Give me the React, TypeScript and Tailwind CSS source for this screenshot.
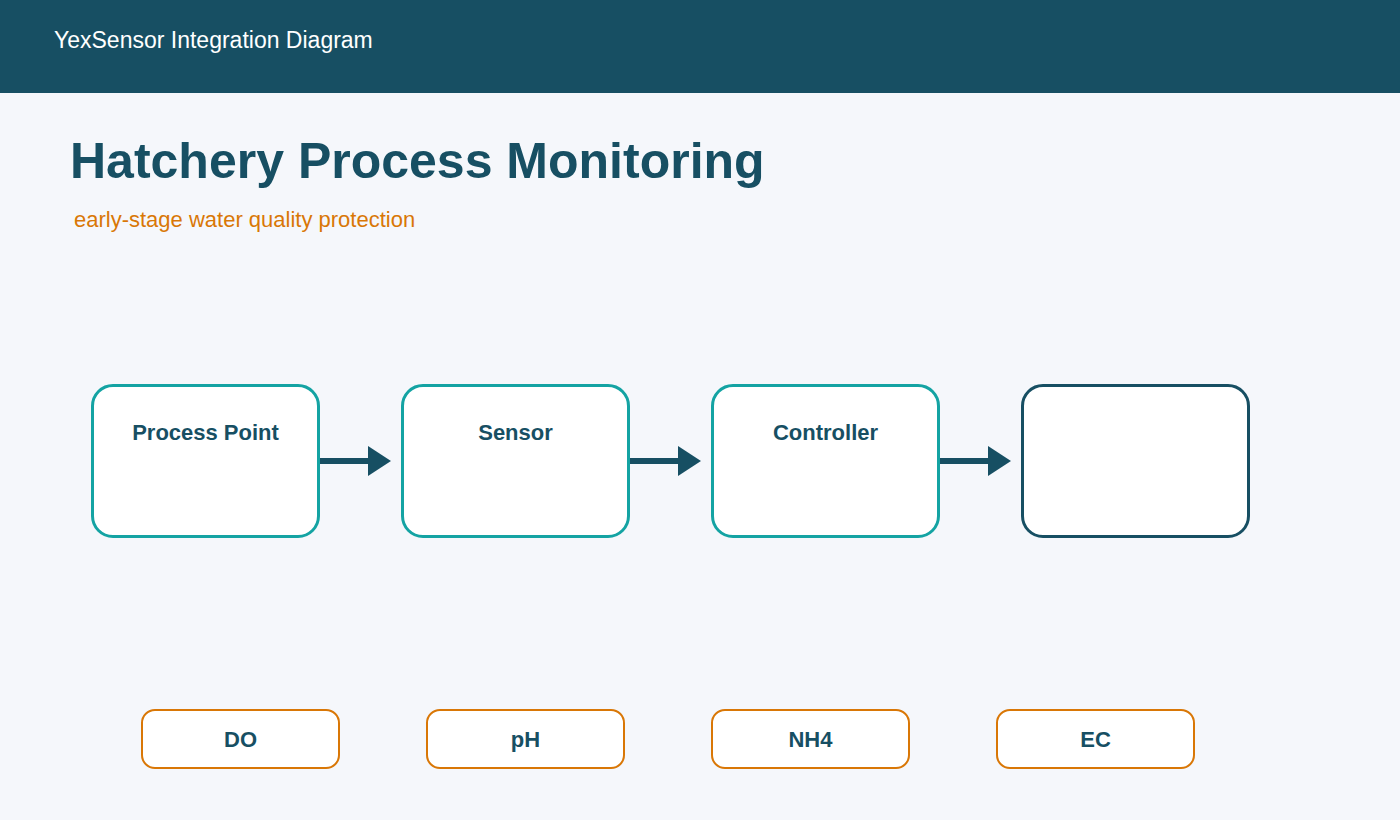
export default function App() {
  const boxes = ["Process Point", "Sensor", "Controller", ""];
  const tags = ["DO", "pH", "NH4", "EC"];
  return (
    <div className="w-[1400px] h-[820px] bg-[#f5f7fb] overflow-hidden" style={{ fontFamily: '"Liberation Sans", Arial, sans-serif' }}>
      <div className="h-[93px] bg-[#174f63] flex items-center pl-[54px] pb-[13px]">
        <span className="text-white text-[23px]">YexSensor Integration Diagram</span>
      </div>
      <div className="pl-[70px] pt-[38px]">
        <h1 className="text-[#174f63] font-bold text-[50px] leading-[60px]">Hatchery Process Monitoring</h1>
        <p className="text-[#d97706] text-[22px] mt-[12px] ml-[4px]">early-stage water quality protection</p>
      </div>
      <div className="flex items-center pl-[91px] mt-[148px]">
        {boxes.map((b, i) => (
          <div key={i} className="flex items-center">
            <div className={`w-[229px] h-[154px] bg-white rounded-[22px] border-[3px] ${i === 3 ? "border-[#174f63]" : "border-[#14a3a3]"} flex justify-center pt-[33px]`}>
              <span className="text-[#174f63] font-bold text-[22px] leading-[26px]">{b}</span>
            </div>
            {i < 3 && (
              <svg width="81" height="32" viewBox="0 0 81 32" className="block">
                <rect x="0" y="13" width="60" height="6" fill="#174f63" />
                <polygon points="48,1 71,16 48,31" fill="#174f63" />
              </svg>
            )}
          </div>
        ))}
      </div>
      <div className="flex pl-[141px] gap-[86px] mt-[171px]">
        {tags.map((t) => (
          <div key={t} className="w-[199px] h-[60px] rounded-[14px] border-[2.5px] border-[#d97706] bg-white flex items-center justify-center">
            <span className="text-[#174f63] font-bold text-[22px]">{t}</span>
          </div>
        ))}
      </div>
    </div>
  );
}
